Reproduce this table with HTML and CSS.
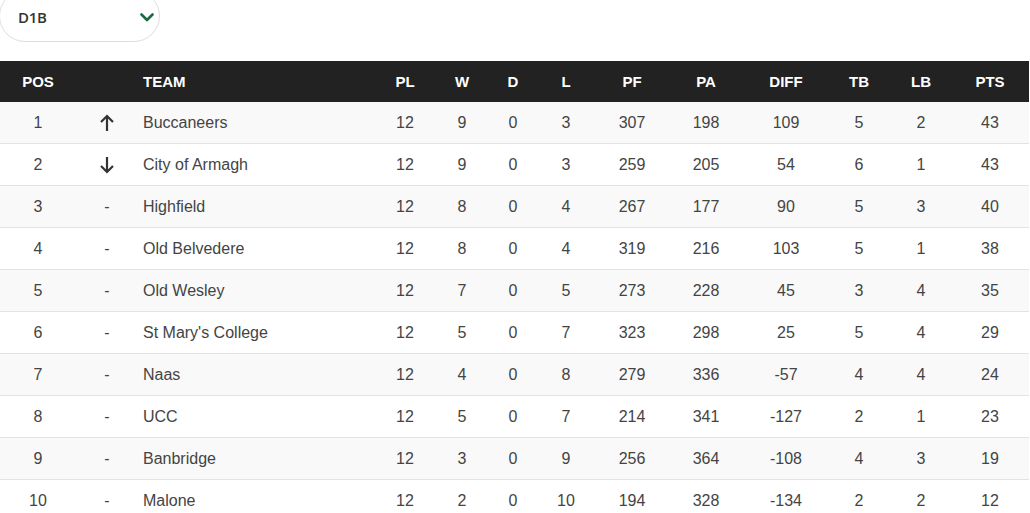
FILE: index.html
```html
<!DOCTYPE html>
<html>
<head>
<meta charset="utf-8">
<link rel="stylesheet" href="styles.css">
</head>
<body>
<div class="page">
  <div class="select">
    <span class="select-label">D1B</span>
    <svg class="chev" width="14" height="9" viewBox="0 0 14 9"><path d="M1.5 1.5 L7 7 L12.5 1.5" fill="none" stroke="#176b45" stroke-width="2.6" stroke-linecap="round" stroke-linejoin="round"/></svg>
  </div>
  <div class="table">
    <div class="row head">
      <div class="c">POS</div><div class="c"></div><div class="l">TEAM</div><div class="c">PL</div><div class="c">W</div><div class="c">D</div><div class="c">L</div><div class="c">PF</div><div class="c">PA</div><div class="c">DIFF</div><div class="c">TB</div><div class="c">LB</div><div class="c">PTS</div>
    </div>
    <div class="row odd">
      <div class="c">1</div><div class="c"><svg width="16" height="18" viewBox="0 0 16 18"><path d="M8 17 V2 M2 8 L8 2 L14 8" fill="none" stroke="#333" stroke-width="2.2"/></svg></div><div class="l">Buccaneers</div><div class="c">12</div><div class="c">9</div><div class="c">0</div><div class="c">3</div><div class="c">307</div><div class="c">198</div><div class="c">109</div><div class="c">5</div><div class="c">2</div><div class="c">43</div>
    </div>
    <div class="row">
      <div class="c">2</div><div class="c"><svg width="16" height="18" viewBox="0 0 16 18"><path d="M8 1 V16 M2 10 L8 16 L14 10" fill="none" stroke="#333" stroke-width="2.2"/></svg></div><div class="l">City of Armagh</div><div class="c">12</div><div class="c">9</div><div class="c">0</div><div class="c">3</div><div class="c">259</div><div class="c">205</div><div class="c">54</div><div class="c">6</div><div class="c">1</div><div class="c">43</div>
    </div>
    <div class="row odd">
      <div class="c">3</div><div class="c">-</div><div class="l">Highfield</div><div class="c">12</div><div class="c">8</div><div class="c">0</div><div class="c">4</div><div class="c">267</div><div class="c">177</div><div class="c">90</div><div class="c">5</div><div class="c">3</div><div class="c">40</div>
    </div>
    <div class="row">
      <div class="c">4</div><div class="c">-</div><div class="l">Old Belvedere</div><div class="c">12</div><div class="c">8</div><div class="c">0</div><div class="c">4</div><div class="c">319</div><div class="c">216</div><div class="c">103</div><div class="c">5</div><div class="c">1</div><div class="c">38</div>
    </div>
    <div class="row odd">
      <div class="c">5</div><div class="c">-</div><div class="l">Old Wesley</div><div class="c">12</div><div class="c">7</div><div class="c">0</div><div class="c">5</div><div class="c">273</div><div class="c">228</div><div class="c">45</div><div class="c">3</div><div class="c">4</div><div class="c">35</div>
    </div>
    <div class="row">
      <div class="c">6</div><div class="c">-</div><div class="l">St Mary's College</div><div class="c">12</div><div class="c">5</div><div class="c">0</div><div class="c">7</div><div class="c">323</div><div class="c">298</div><div class="c">25</div><div class="c">5</div><div class="c">4</div><div class="c">29</div>
    </div>
    <div class="row odd">
      <div class="c">7</div><div class="c">-</div><div class="l">Naas</div><div class="c">12</div><div class="c">4</div><div class="c">0</div><div class="c">8</div><div class="c">279</div><div class="c">336</div><div class="c">-57</div><div class="c">4</div><div class="c">4</div><div class="c">24</div>
    </div>
    <div class="row">
      <div class="c">8</div><div class="c">-</div><div class="l">UCC</div><div class="c">12</div><div class="c">5</div><div class="c">0</div><div class="c">7</div><div class="c">214</div><div class="c">341</div><div class="c">-127</div><div class="c">2</div><div class="c">1</div><div class="c">23</div>
    </div>
    <div class="row odd">
      <div class="c">9</div><div class="c">-</div><div class="l">Banbridge</div><div class="c">12</div><div class="c">3</div><div class="c">0</div><div class="c">9</div><div class="c">256</div><div class="c">364</div><div class="c">-108</div><div class="c">4</div><div class="c">3</div><div class="c">19</div>
    </div>
    <div class="row">
      <div class="c">10</div><div class="c">-</div><div class="l">Malone</div><div class="c">12</div><div class="c">2</div><div class="c">0</div><div class="c">10</div><div class="c">194</div><div class="c">328</div><div class="c">-134</div><div class="c">2</div><div class="c">2</div><div class="c">12</div>
    </div>
  </div>
</div>
</body>
</html>
```
FILE: styles.css
```css
html, body {
  margin: 0;
  padding: 0;
  background: #fff;
}
body {
  font-family: "Liberation Sans", Arial, sans-serif;
  color: #444;
  overflow: hidden;
}
.page {
  width: 1029px;
}
.select {
  box-sizing: border-box;
  width: 161px;
  height: 52px;
  margin-top: -10px;
  margin-left: -1px;
  border: 1px solid #dedede;
  border-radius: 26px;
  display: flex;
  align-items: center;
  justify-content: space-between;
  padding: 2px 5px 0 18px;
  font-family: "Open Sans", "Liberation Sans", sans-serif;
  font-weight: 600;
  font-size: 15px;
  color: #333;
}
.select-label {
  letter-spacing: -0.3px;
}
.chev {
  display: block;
}
.table {
  margin-top: 19px;
}
.row {
  display: grid;
  grid-template-columns: 76px 62px 239px 56px 58px 44px 62px 70px 78px 82px 64px 60px 78px;
  height: 42px;
  box-sizing: border-box;
  border-bottom: 1px solid #e3e3e3;
  font-size: 16px;
  background: #fff;
  padding-top: 1px;
}
.row.odd {
  background: #f9f9f9;
}
.row.head {
  background: #222;
  color: #fff;
  font-weight: bold;
  font-size: 15px;
  height: 41px;
  border-bottom: none;
  padding-top: 0;
  padding-bottom: 1px;
}
.c, .l {
  display: flex;
  align-items: center;
}
.c {
  justify-content: center;
}
.l {
  padding-left: 5px;
}
.c svg {
  display: block;
}
```
